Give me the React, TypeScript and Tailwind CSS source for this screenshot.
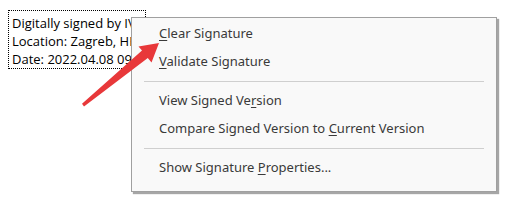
import React from "react";

type Item = { label: string; key: number } | "sep";

// key = index of the access-key letter that gets underlined
const items: Item[] = [
  { label: "Clear Signature", key: 0 },
  { label: "Validate Signature", key: 0 },
  "sep",
  { label: "View Signed Version", key: 14 },
  { label: "Compare Signed Version to Current Version", key: 26 },
  "sep",
  { label: "Show Signature Properties...", key: 15 },
];

function Label({ label, k }: { label: string; k: number }) {
  return (
    <span>
      {label.slice(0, k)}
      <span className="underline underline-offset-2">{label[k]}</span>
      {label.slice(k + 1)}
    </span>
  );
}

export default function App() {
  return (
    <div className="relative h-[201px] w-[512px] overflow-hidden bg-white" style={{ fontFamily: "'Noto Sans', 'Open Sans', sans-serif" }}>
      {/* signature appearance */}
      <div className="ml-[8px] mt-[10px] h-[59px] w-[138px] border border-dotted border-black px-[3px] pt-[3px] text-[13px] leading-[18px] text-black" style={{ fontFamily: "'Open Sans', 'Noto Sans', sans-serif" }}>
        <div className="whitespace-nowrap">Digitally signed by IV</div>
        <div className="whitespace-nowrap">Location: Zagreb, HR</div>
        <div className="whitespace-nowrap">Date: 2022.04.08 09:</div>
      </div>

      {/* context menu */}
      <div className="absolute left-[131px] top-[17px] w-[366px] border border-[#a0a0a0] bg-[#f9f9f9] pb-[9px] pt-[2px] text-[13px] text-[#3a3a3a] shadow-[2px_2px_1px_rgba(0,0,0,0.35)]">
        {items.map((it, i) =>
          it === "sep" ? (
            <div key={i} className="flex h-[11px] items-center px-[12px]">
              <div className="h-px w-full bg-[#cfcfcf]" />
            </div>
          ) : (
            <div key={i} className="flex h-[28px] items-center whitespace-nowrap pl-[27px]">
              <Label label={it.label} k={it.key} />
            </div>
          )
        )}
      </div>

      {/* red pointer arrow */}
      <svg className="absolute left-0 top-0" width="512" height="201" viewBox="0 0 512 201">
        <polygon
          points="159,43 151.5,62.5 147.8,58 84,106.4 82,103.8 142,50.6 138.5,46.5"
          fill="#e8383a"
        />
      </svg>
    </div>
  );
}
